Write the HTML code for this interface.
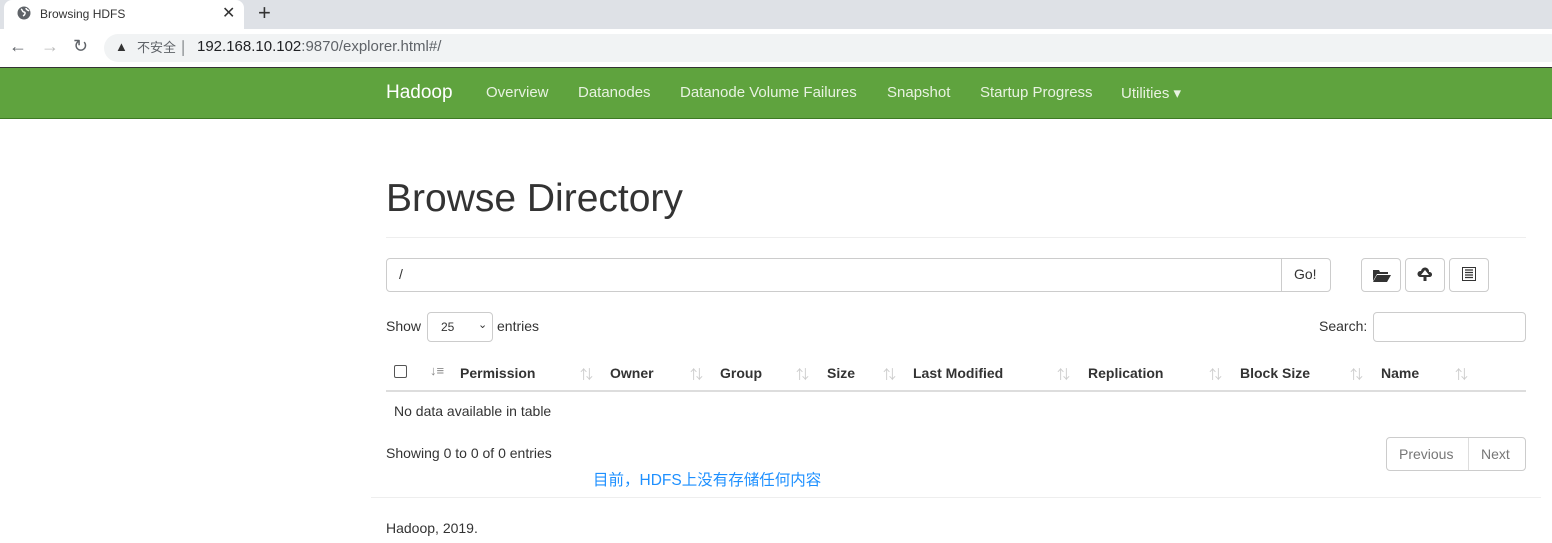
<!DOCTYPE html>
<html><head><meta charset="utf-8"><style>
*{box-sizing:border-box;margin:0;padding:0}
body{width:1552px;height:543px;overflow:hidden;background:#fff;font-family:"Liberation Sans","Noto Sans CJK SC",sans-serif;color:#333;position:relative;font-size:14px}
.a{position:absolute;white-space:nowrap}
.tabbar{position:absolute;left:0;top:0;width:1552px;height:29px;background:#dee1e6}
.tab{position:absolute;left:4px;top:0;width:240px;height:29px;background:#fff;border-radius:8px 8px 0 0}
.addr{position:absolute;left:0;top:29px;width:1552px;height:38px;background:#fff}
.omni{position:absolute;left:104px;top:34px;width:1460px;height:28px;background:#f1f3f4;border-radius:14px}
.nav{position:absolute;left:0;top:67px;width:1552px;height:52px;background:#5fa33e;border-top:1px solid #333;border-bottom:1px solid #3d7a23}
.nav span{position:absolute;top:16px;color:#e8f2e1;font-size:15px}
.btn{position:absolute;border:1px solid #ccc;border-radius:4px;background:#fff}
.s{color:#ccc;font-size:13px}
</style></head><body>
<div class="tabbar"><div class="tab"></div></div>
<svg class="a" style="left:17px;top:6px" width="14" height="14" viewBox="0 0 14 14"><circle cx="7" cy="7" r="6.5" fill="#5f6368"/><path d="M4 3c2 1 1 3 3 3s1 3-1 4M9 2c0 2 2 2 3 3" stroke="#fff" stroke-width="1.5" fill="none"/></svg>
<div class="a" style="left:40px;top:7px;font-size:12px;color:#333">Browsing HDFS</div>
<div class="a" style="left:222px;top:3px;font-size:16px;color:#333">✕</div>
<div class="a" style="left:258px;top:0px;font-size:22px;color:#333">+</div>
<div class="addr"></div>
<div class="a" style="left:9px;top:36px;font-size:18px;color:#5f6368">←</div>
<div class="a" style="left:41px;top:36px;font-size:18px;color:#bbb">→</div>
<div class="a" style="left:73px;top:36px;font-size:18px;color:#5f6368">↻</div>
<div class="omni"></div>
<div class="a" style="left:115px;top:39px;font-size:13px;color:#333">▲</div>
<div class="a" style="left:137px;top:40px;font-size:13px;color:#5f6368;line-height:15px">不安全 │</div>
<div class="a" style="left:197px;top:38px;font-size:15px;color:#202124">192.168.10.102<span style="color:#5f6368">:9870/explorer.html#/</span></div>
<div class="nav">
<span style="left:386px;top:14px;font-size:19px;color:#fff">Hadoop</span>
<span style="left:486px">Overview</span><span style="left:578px">Datanodes</span><span style="left:680px">Datanode Volume Failures</span><span style="left:887px">Snapshot</span><span style="left:980px">Startup Progress</span><span style="left:1121px">Utilities ▾</span>
</div>
<div class="a" style="left:386px;top:177px;font-size:39px;color:#333">Browse Directory</div>
<div class="a" style="left:386px;top:237px;width:1140px;height:1px;background:#eee"></div>
<div class="btn" style="left:386px;top:258px;width:945px;height:34px;border-radius:4px"></div>
<div class="a" style="left:1281px;top:259px;width:1px;height:32px;background:#ccc"></div>
<div class="a" style="left:399px;top:266px;font-size:14px">/</div>
<div class="a" style="left:1294px;top:266px;font-size:14px">Go!</div>
<div class="btn" style="left:1361px;top:258px;width:40px;height:34px"></div>
<div class="btn" style="left:1405px;top:258px;width:40px;height:34px"></div>
<div class="btn" style="left:1449px;top:258px;width:40px;height:34px"></div>
<svg class="a" style="left:1373px;top:268px" width="18" height="14"><path d="M0 2h6l1 2h8v2H4L0 13zM4 7h14l-4 7H0z" fill="#333"/></svg>
<svg class="a" style="left:1417px;top:266px" width="16" height="16"><path d="M3 11a3 3 0 0 1 1-6 4 4 0 0 1 8 1 2.5 2.5 0 0 1 1 5H9.5V9H12L8 4 4 9h2.5v2z M6.5 9h3v6h-3z" fill="#333"/></svg>
<svg class="a" style="left:1462px;top:267px" width="14" height="14"><rect x="0.5" y="0.5" width="13" height="13" fill="none" stroke="#333"/><path d="M3 3h8M3 5.5h8M3 8h8M3 10.5h8" stroke="#333" stroke-width="1.2"/></svg>
<div class="a" style="left:386px;top:318px">Show</div>
<div class="btn" style="left:427px;top:312px;width:66px;height:30px"></div>
<div class="a" style="left:441px;top:320px;font-size:12px">25</div>
<div class="a" style="left:478px;top:318px;font-size:11px">⌄</div>
<div class="a" style="left:497px;top:318px">entries</div>
<div class="a" style="left:1319px;top:318px">Search:</div>
<div class="btn" style="left:1373px;top:312px;width:153px;height:30px"></div>
<div class="btn" style="left:394px;top:365px;width:13px;height:13px;border-radius:2px;border-color:#555"></div>
<div class="a s" style="left:430px;top:363px;color:#888">↓≡</div>
<div class="a" style="left:460px;top:365px;font-weight:bold">Permission</div>
<div class="a s" style="left:580px;top:364px">⇅</div>
<div class="a" style="left:610px;top:365px;font-weight:bold">Owner</div>
<div class="a s" style="left:690px;top:364px">⇅</div>
<div class="a" style="left:720px;top:365px;font-weight:bold">Group</div>
<div class="a s" style="left:796px;top:364px">⇅</div>
<div class="a" style="left:827px;top:365px;font-weight:bold">Size</div>
<div class="a s" style="left:883px;top:364px">⇅</div>
<div class="a" style="left:913px;top:365px;font-weight:bold">Last Modified</div>
<div class="a s" style="left:1057px;top:364px">⇅</div>
<div class="a" style="left:1088px;top:365px;font-weight:bold">Replication</div>
<div class="a s" style="left:1209px;top:364px">⇅</div>
<div class="a" style="left:1240px;top:365px;font-weight:bold">Block Size</div>
<div class="a s" style="left:1350px;top:364px">⇅</div>
<div class="a" style="left:1381px;top:365px;font-weight:bold">Name</div>
<div class="a s" style="left:1455px;top:364px">⇅</div>
<div class="a" style="left:386px;top:390px;width:1140px;height:2px;background:#ddd"></div>
<div class="a" style="left:394px;top:403px">No data available in table</div>
<div class="a" style="left:386px;top:445px">Showing 0 to 0 of 0 entries</div>
<div class="btn" style="left:1386px;top:437px;width:140px;height:34px"></div>
<div class="a" style="left:1468px;top:438px;width:1px;height:32px;background:#ddd"></div>
<div class="a" style="left:1399px;top:446px;color:#777">Previous</div>
<div class="a" style="left:1481px;top:446px;color:#777">Next</div>
<div class="a" style="left:593px;top:468px;color:#1e90ff;font-size:15.5px">目前，HDFS上没有存储任何内容</div>
<div class="a" style="left:371px;top:497px;width:1170px;height:1px;background:#eee"></div>
<div class="a" style="left:386px;top:520px">Hadoop, 2019.</div>
</body></html>
